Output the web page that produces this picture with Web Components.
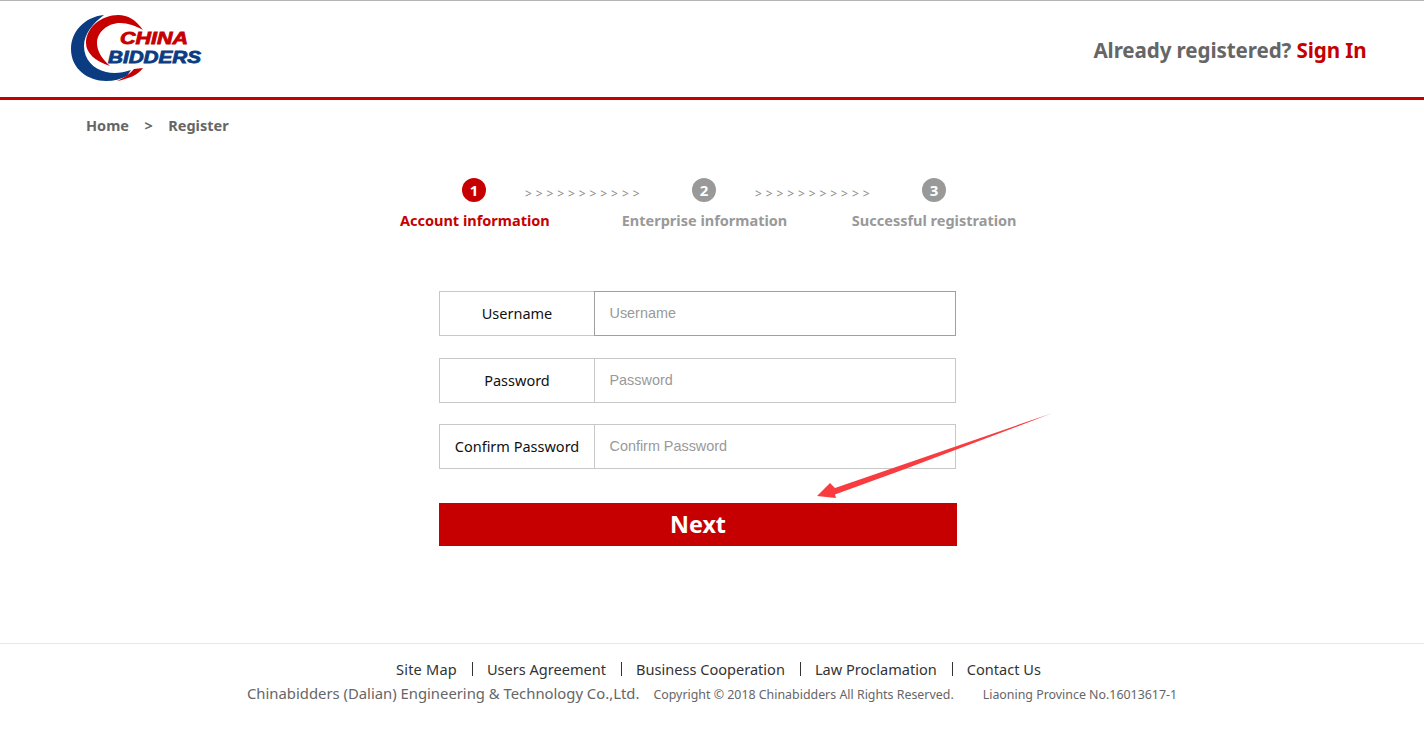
<!DOCTYPE html>
<html lang="en">
<head>
<meta charset="utf-8">
<title>Register</title>
<style>
  html, body { margin: 0; padding: 0; background: #fff; }
  body { width: 1424px; height: 742px; overflow: hidden; position: relative; font-family: "Noto Sans", "Open Sans", sans-serif; }
</style>
</head>
<body>
<site-header></site-header>
<bread-crumb></bread-crumb>
<reg-steps active="1"></reg-steps>
<reg-form>
  <form-row label="Username" placeholder="Username" focused></form-row>
  <form-row label="Password" placeholder="Password"></form-row>
  <form-row label="Confirm Password" placeholder="Confirm Password"></form-row>
  <next-button>Next</next-button>
</reg-form>
<site-footer></site-footer>
<red-arrow></red-arrow>

<script>
class SiteHeader extends HTMLElement {
  constructor() {
    super();
    const shadow = this.attachShadow({ mode: "open" });
    shadow.innerHTML = /* html */`
    <style>
      :host {
        display: flex;
        box-sizing: border-box;
        height: 100px;
        align-items: center;
        justify-content: space-between;
        padding: 0 57.500px 0 70px;
        border-top: 1px solid #b4b4b4;
        border-bottom: 3px solid #c60000;
      }
      svg { display: block; margin-top: -3px; }
      .login { font-size: 20.600px; font-weight: 700; color: #666; margin-top: 2px; letter-spacing: -0.1px; }
      .login a { color: #c60000; text-decoration: none; }
    </style>
    <svg width="135" height="70" viewBox="70 14 135 70">
      <path fill="#0b3c82" d="M104 16C84 18 71 33 71 50c0 20 17 32 35 32 8 0 15-2 21-5l4-6c-9 3-17 4-25 2-13-3-22-13-22-26 0-12 9-23 20-31z"/>
      <path fill="#c60000" d="M143 31c-7-10-15-15-25-15-16 0-32 12-32 28 0 10 9 18 24 23-8-7-13-15-13-23 0-11 11-20 23-20 8 0 16 3 23 7z"/>
      <path fill="#c60000" d="M117 82c11-2 21-6 26-13l-9 1c-4 5-10 9-17 12z"/>
      <text x="120" y="45" textLength="68" lengthAdjust="spacingAndGlyphs" font-family="Liberation Sans" font-weight="700" font-style="italic" font-size="16.500" fill="#c60000" stroke="#c60000" stroke-width="0.8">CHINA</text>
      <text x="108" y="64" textLength="93" lengthAdjust="spacingAndGlyphs" font-family="Liberation Sans" font-weight="700" font-style="italic" font-size="16.500" fill="#0b3c82" stroke="#0b3c82" stroke-width="0.8">BIDDERS</text>
    </svg>
    <div class="login">Already registered? <a href="#">Sign In</a></div>
    `;
  }
}

class BreadCrumb extends HTMLElement {
  constructor() {
    super();
    const shadow = this.attachShadow({ mode: "open" });
    shadow.innerHTML = /* html */`
    <style>
      :host {
        display: flex;
        gap: 15.500px;
        padding: 15px 0 1px 86px;
        height: 20px;
        line-height: 20px;
        font-size: 14.500px;
        font-weight: 700;
        color: #666;
      }
    </style>
    <span>Home</span><span>&gt;</span><span>Register</span>
    `;
  }
}

class RegSteps extends HTMLElement {
  constructor() {
    super();
    const shadow = this.attachShadow({ mode: "open" });
    const labels = ["Account information", "Enterprise information", "Successful registration"];
    const active = Number(this.getAttribute("active")) || 1;
    const dots = labels.map((l, i) =>
      `<span class="dot ${i + 1 === active ? "on" : ""}">${i + 1}</span>`
    ).join(`<span class="chev">&gt;&gt;&gt;&gt;&gt;&gt;&gt;&gt;&gt;&gt;&gt;</span>`);
    const names = labels.map((l, i) =>
      `<span class="name ${i + 1 === active ? "on" : ""}">${l}</span>`
    ).join("");
    shadow.innerHTML = /* html */`
    <style>
      :host { display: block; margin: 42px 0 0 359px; width: 690px; }
      .row { display: flex; justify-content: center; align-items: center; }
      .dot {
        width: 24px; height: 24px; border-radius: 50%;
        background: #999; color: #fff;
        font-size: 15px; font-weight: 700; line-height: 24px; text-align: center;
      }
      .dot.on { background: #c60000; }
      .chev {
        width: 206px; text-align: left;
        font-family: "Noto Sans", sans-serif;
        font-size: 12px; letter-spacing: 3.900px; color: #888;
        padding: 6px 0 0 39px; box-sizing: border-box;
      }
      .names { margin-top: 7px; padding-left: 1px; }
      .name {
        width: 230px; text-align: center;
        font-size: 14.500px; font-weight: 700; line-height: 22px; color: #999;
      }
      .name.on { color: #c60000; }
    </style>
    <div class="row">${dots}</div>
    <div class="row names">${names}</div>
    `;
  }
}

class RegForm extends HTMLElement {
  constructor() {
    super();
    const shadow = this.attachShadow({ mode: "open" });
    shadow.innerHTML = /* html */`
    <style>
      :host { display: flex; flex-direction: column; width: 518px; margin: 60px 0 0 439px; }
      ::slotted(form-row:nth-child(2)) { margin-bottom: 21px; }
    </style>
    <slot></slot>
    `;
  }
}

class FormRow extends HTMLElement {
  constructor() {
    super();
    const shadow = this.attachShadow({ mode: "open" });
    const label = this.getAttribute("label") || "";
    const placeholder = this.getAttribute("placeholder") || "";
    shadow.innerHTML = /* html */`
    <style>
      :host {
        display: flex;
        box-sizing: border-box;
        width: 517px;
        height: 45px;
        margin-bottom: 22px;
        background: #fff;
      }
      .label {
        box-sizing: border-box;
        width: 155px; flex: none;
        border: 1px solid #c8c8c8; border-right: 0;
        display: flex; align-items: center; justify-content: center;
        padding-bottom: 2px;
        font-size: 14.500px; color: #111;
      }
      .field {
        flex: 1;
        border: 1px solid #c8c8c8;
        display: flex; align-items: center; padding-left: 14.500px; padding-bottom: 2px;
        font-family: "Liberation Sans", Arial, sans-serif;
        font-size: 14.400px; color: #999;
      }
      :host([focused]) .field { border-color: #a0a0a0; }
    </style>
    <div class="label">${label}</div>
    <div class="field">${placeholder}</div>
    `;
  }
}

class NextButton extends HTMLElement {
  constructor() {
    super();
    const shadow = this.attachShadow({ mode: "open" });
    shadow.innerHTML = /* html */`
    <style>
      :host {
        display: flex; align-items: center; justify-content: center;
        box-sizing: border-box;
        width: 518px; height: 43px; margin-top: 12px; padding-bottom: 1px;
        background: #c60000; color: #fff;
        font-size: 23.300px; font-weight: 700; cursor: pointer;
      }
    </style>
    <slot></slot>
    `;
  }
}

class SiteFooter extends HTMLElement {
  constructor() {
    super();
    const shadow = this.attachShadow({ mode: "open" });
    const links = ["Site Map", "Users Agreement", "Business Cooperation", "Law Proclamation", "Contact Us"];
    shadow.innerHTML = /* html */`
    <style>
      :host {
        display: block;
        margin-top: 97px;
        border-top: 1px solid #e8e8e8;
        padding-top: 14px;
      }
      .links { display: flex; padding-left: 396px; font-size: 14.570px; line-height: 22px; color: #333; }
      .links span:first-child { letter-spacing: 0.200px; }
      .links span + span { margin-left: 15px; padding-left: 15px; position: relative; }
      .links span + span::before {
        content: ""; position: absolute; left: 0; top: 4px; width: 1px; height: 14px; background: #333;
      }
      .info { display: flex; align-items: baseline; padding: 2px 0 0 247px; line-height: 22px; color: #666; }
      .co { font-size: 14.830px; }
      .small { font-size: 12.400px; margin-left: 14px; }
      .small + .small { margin-left: 29px; }
    </style>
    <div class="links">${links.map(l => `<span>${l}</span>`).join("")}</div>
    <div class="info">
      <span class="co">Chinabidders (Dalian) Engineering &amp; Technology Co.,Ltd.</span>
      <span class="small">Copyright © 2018 Chinabidders All Rights Reserved.</span>
      <span class="small">Liaoning Province No.16013617-1</span>
    </div>
    `;
  }
}

// the annotation lying over the form
class RedArrow extends HTMLElement {
  constructor() {
    super();
    const shadow = this.attachShadow({ mode: "open" });
    shadow.innerHTML = /* html */`
    <style>
      :host { display: block; position: absolute; left: 810px; top: 405px; width: 250px; height: 100px; pointer-events: none; }
      svg { display: block; }
    </style>
    <svg width="250" height="100" viewBox="810 405 250 100">
      <defs>
        <linearGradient id="fade" gradientUnits="userSpaceOnUse" x1="1054" y1="412" x2="990" y2="438">
          <stop offset="0" stop-color="#ff4040" stop-opacity="0.4"/>
          <stop offset="0.3" stop-color="#fa3c3c"/>
          <stop offset="1" stop-color="#f83c40"/>
        </linearGradient>
      </defs>
      <path fill="url(#fade)" d="M1054 412.500L835 488 830 483 817 496 836 498 835 494.500 905 469z"/>
    </svg>
    `;
  }
}

customElements.define("site-header", SiteHeader);
customElements.define("bread-crumb", BreadCrumb);
customElements.define("reg-steps", RegSteps);
customElements.define("reg-form", RegForm);
customElements.define("form-row", FormRow);
customElements.define("next-button", NextButton);
customElements.define("site-footer", SiteFooter);
customElements.define("red-arrow", RedArrow);
</script>
</body>
</html>
